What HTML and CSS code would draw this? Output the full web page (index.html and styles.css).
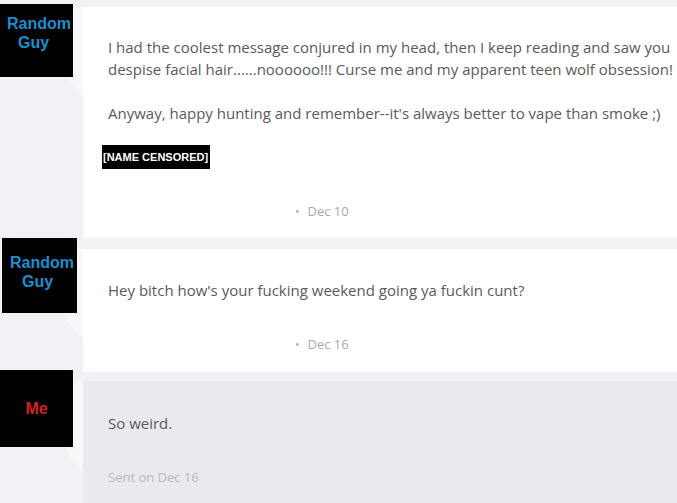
FILE: index.html
```html
<!DOCTYPE html>
<html>
<head>
<meta charset="utf-8">
<link rel="stylesheet" href="styles.css">
</head>
<body>
<div class="thread">
  <div class="msg msg-1">
    <div class="avatar-col">
      <div class="avatar avatar-a"><span class="name blue"><span class="l1">Random</span><span class="l2">Guy</span></span></div>
    </div>
    <div class="bubble">
      <p class="text nowrap">I had the coolest message conjured in my head, then I keep reading and saw you<br>despise facial hair......noooooo!!! Curse me and my apparent teen wolf obsession!<br><br>Anyway, happy hunting and remember--it's always better to vape than smoke ;)</p>
      <div class="censored">[NAME CENSORED]</div>
      <div class="date"><span class="dot">•</span>Dec 10</div>
    </div>
  </div>
  <div class="msg msg-2">
    <div class="avatar-col">
      <div class="avatar avatar-b"><span class="name blue"><span class="l1">Random</span><span class="l2">Guy</span></span></div>
    </div>
    <div class="bubble">
      <p class="text">Hey bitch how's your fucking weekend going ya fuckin cunt?</p>
      <div class="date"><span class="dot">•</span>Dec 16</div>
    </div>
  </div>
  <div class="msg msg-3">
    <div class="avatar-col">
      <div class="avatar avatar-c"><span class="name red">Me</span></div>
    </div>
    <div class="bubble bubble-own">
      <p class="text">So weird.</p>
      <div class="sent">Sent on Dec 16</div>
    </div>
  </div>
</div>
</body>
</html>
```

FILE: styles.css
```css
html {
  background: #f1f2f6;
}
html, body {
  margin: 0;
  padding: 0;
  height: 100%;
  overflow: hidden;
}
.thread {
  display: flex;
  flex-direction: column;
}
.msg {
  display: flex;
  align-items: flex-start;
}
.avatar-col {
  width: 83px;
  flex: none;
  position: relative;
  z-index: 2;
}
.avatar {
  background: #000;
  display: flex;
  flex-direction: column;
  font-family: "Liberation Sans", Arial, sans-serif;
  font-weight: bold;
  font-size: 16px;
  line-height: 19px;
  box-sizing: border-box;
}
.l1, .l2 { display: block; }
.avatar-a {
  width: 73px;
  height: 73px;
  margin-top: 4px;
  padding: 10px 0 0 7px;
}
.avatar-a .l2 { padding-left: 11px; }
.avatar-b {
  width: 75px;
  height: 75px;
  margin-left: 2px;
  padding: 15px 0 0 8px;
}
.avatar-b .l2 { padding-left: 12px; }
.avatar-c {
  width: 73px;
  height: 77px;
  margin-top: -2px;
  justify-content: center;
  align-items: center;
}
.blue { color: #1c8fd0; }
.red { color: #d42222; }
.bubble {
  flex: 1;
  background: #fff;
  position: relative;
  padding: 29px 0 16px 25px;
  min-width: 0;
}
.bubble::before {
  content: "";
  position: absolute;
  left: -16px;
  top: 0;
  width: 16px;
  height: 90px;
  background: #f7f8fa;
  clip-path: polygon(0 0, 100% 0, 100% 100%, 0 72px);
  z-index: 1;
}
.msg-1 .bubble { margin-top: 7px; }
.msg-2 .bubble { margin-top: 11px; padding-top: 30px; padding-bottom: 17px; }
.msg-2 .date { margin-top: 33px; }
.msg-3 .bubble { margin-top: 9px; padding-top: 31px; padding-bottom: 30px; }
.bubble-own { background: #e9eaef; }
.text {
  margin: 0;
  font-family: "Open Sans", sans-serif;
  font-size: 15px;
  line-height: 22px;
  color: #5a5a5a;
}
.nowrap { white-space: nowrap; }
.censored {
  display: inline-block;
  margin: 21px 0 0 -6px;
  padding: 0 2px 0 1px;
  background: #000;
  color: #fff;
  font-family: "Liberation Sans", Arial, sans-serif;
  font-weight: bold;
  font-size: 11px;
  line-height: 24px;
}
.date {
  margin-top: 32px;
  padding-left: 187px;
  font-family: "Open Sans", sans-serif;
  font-size: 13px;
  line-height: 20px;
  color: #a9a9a9;
}
.dot {
  font-size: 12px;
  margin-right: 8px;
  color: #b0b0b0;
}
.sent {
  margin-top: 33px;
  font-family: "Open Sans", sans-serif;
  font-size: 13px;
  line-height: 20px;
  color: #b9b9bd;
}
```
